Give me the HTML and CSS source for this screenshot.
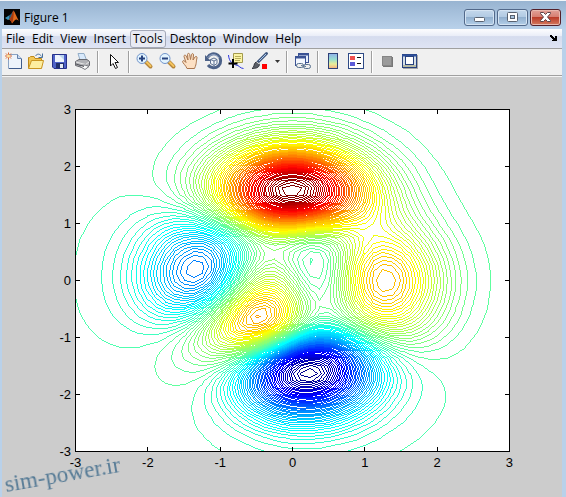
FILE: index.html
```html
<!DOCTYPE html>
<html lang="en">
<head>
<meta charset="utf-8">
<title>Figure 1</title>
<link rel="stylesheet" href="styles.css">
</head>
<body>
<div class="window">
  <header class="titlebar">
    <svg class="logo" width="16" height="16" viewBox="0 0 16 16" aria-hidden="true">
      <rect width="16" height="16" fill="#050505"/>
      <path d="M1 9 L5 6.500 L7 8 L5 10.500 L4 11 Z" fill="#3a93b8"/>
      <path d="M5 6.500 L7 5 L9.500 1.500 L7 9 L5 10.500 Z" fill="#285a78"/>
      <path d="M9.500 1.500 C11 3 13 9 15 12 C13 10.500 12 10 10.500 11.500 L8 14.500 C7.500 12.500 6.500 11 5 10.500 C7.500 9 8 4 9.500 1.500 Z" fill="#e06a1c"/>
      <path d="M9.500 1.500 C10 4 9.500 10 8 14.500 C7.500 12.500 6.500 11 5 10.500 C7.500 9 8 4 9.500 1.500 Z" fill="#a33a12"/>
    </svg>
    <h1 class="title">Figure 1</h1>
    <div class="controls">
      <button class="control" aria-label="Minimize"><svg width="30" height="16" viewBox="0 0 30 16"><rect x="10.500" y="8.500" width="10" height="4" rx="1" fill="#fff" stroke="#596270"/></svg></button>
      <button class="control" aria-label="Maximize"><svg width="30" height="16" viewBox="0 0 30 16"><rect x="10.500" y="3.500" width="10" height="9" rx="1" fill="#fff" stroke="#596270"/><rect x="13.500" y="6.500" width="4" height="3" fill="#a9c4df" stroke="#596270"/></svg></button>
      <button class="control control-close" aria-label="Close"><svg width="30" height="16" viewBox="0 0 30 16"><path d="M10.500 3.500 H13.500 L15.500 5.500 L17.500 3.500 H20.500 V4.500 L17.500 8 L20.500 11.500 V12.500 H17.500 L15.500 10.500 L13.500 12.500 H10.500 V11.500 L13.500 8 L10.500 4.500 Z" fill="#fff" stroke="#5c4448"/></svg></button>
    </div>
  </header>

  <nav class="menubar">
    <button class="menu">File</button>
    <button class="menu">Edit</button>
    <button class="menu">View</button>
    <button class="menu">Insert</button>
    <button class="menu menu-active">Tools</button>
    <button class="menu">Desktop</button>
    <button class="menu">Window</button>
    <button class="menu">Help</button>
    <button class="dock-arrow" aria-label="Dock figure"><svg width="8" height="7" viewBox="0 0 8 7" shape-rendering="crispEdges"><path d="M0 0h2v1h1v1h1v1h1v-2h2v5h-5v-1h1v-1h-1v-1h-1v-1h-1z"/></svg></button>
  </nav>

  <div class="toolbar">
    <button class="tool" aria-label="New figure"><svg viewBox="0 0 23 24"><path d="M6.500 4.500 H15.500 L19.500 8.500 V18.500 H6.500 Z" fill="#eef4fb" stroke="#8ba3c4"/><path d="M19.500 9 V18.500 H7" fill="none" stroke="#3f5c8c"/><path d="M15.500 4.500 V8.500 H19.500" fill="#c9d9ee" stroke="#6482ad"/><path d="M6.500 2.500 V9.500 M3 6 H10 M4 3.500 L9 8.500 M9 3.500 L4 8.500" stroke="#d9652c"/><circle cx="6.500" cy="6" r="1.500" fill="#ffe3a0"/></svg></button>
    <button class="tool" aria-label="Open file"><svg viewBox="0 0 23 24"><path d="M3.500 18 V7.500 H4.500 L5.500 6.500 H9 L10 8.500 H16.500 V18 Z" fill="#f2c755" stroke="#c08a1a"/><path d="M3.500 18.500 L6.500 10.500 H18.500 L16.500 18.500 Z" fill="#fdeea0" stroke="#c99521"/><path d="M10.500 6 C12 3.500 15 3.500 16.500 6.500 M17.500 3.500 V7.500 H13.500" fill="none" stroke="#49719d"/></svg></button>
    <button class="tool" aria-label="Save figure"><svg viewBox="0 0 23 24"><path d="M4.500 4.500 H18.500 V18.500 H6 L4.500 17 Z" fill="#4f62c8" stroke="#26318a"/><rect x="7" y="5" width="9" height="7" fill="#eef4fc"/><path d="M11 5 H16 V10 Z" fill="#b9d4ee"/><rect x="8" y="13" width="8" height="5" fill="#22306c"/><rect x="12" y="14" width="3" height="4" fill="#e6ebf5"/></svg></button>
    <button class="tool" aria-label="Print figure"><svg viewBox="0 0 23 24"><path d="M7 3.500 H13 L15.500 10 H9 Z" fill="#d8e9fb" stroke="#93adc7"/><path d="M4.500 11.500 L8 9.500 H16 L18.500 11.500 V15.500 L14.500 18.500 L4.500 15.500 Z" fill="#b0b1b5" stroke="#66676d"/><path d="M5 12 L14.500 14.500 L18 12" fill="none" stroke="#e6e6e6"/><path d="M8 16 L14 19.500 L18 16.500 L14 15 Z" fill="#fafafa" stroke="#787a80"/><path d="M5 14 L13 16.500" stroke="#55565c"/></svg></button>
    <span class="separator"></span>
    <button class="tool" aria-label="Edit plot"><svg viewBox="0 0 23 24"><path d="M8.500 4.500 V16 L11 13.500 L13.500 18.500 L15.500 17.500 L13 12.500 H16.500 Z" fill="#fff" stroke="#111"/></svg></button>
    <span class="separator"></span>
    <button class="tool" aria-label="Zoom in"><svg viewBox="0 0 23 24"><path d="M13 12 L17.500 16.500" stroke="#b5853a" stroke-width="4" stroke-linecap="round"/><path d="M13.500 12 L17.500 16" stroke="#f4c45e" stroke-width="2" stroke-linecap="round"/><circle cx="9" cy="8.500" r="5" fill="#e2f4ff" stroke="#7194cb"/><path d="M6 8.500 H12 M9 5.500 V11.500" stroke="#27427f" stroke-width="2"/></svg></button>
    <button class="tool" aria-label="Zoom out"><svg viewBox="0 0 23 24"><path d="M13 12 L17.500 16.500" stroke="#b5853a" stroke-width="4" stroke-linecap="round"/><path d="M13.500 12 L17.500 16" stroke="#f4c45e" stroke-width="2" stroke-linecap="round"/><circle cx="9" cy="8.500" r="5" fill="#e2f4ff" stroke="#7194cb"/><path d="M6 8.500 H12" stroke="#27427f" stroke-width="2"/></svg></button>
    <button class="tool" aria-label="Pan"><svg viewBox="0 0 23 24"><path d="M8 18.500 C7 15.500 3.500 13 3.500 11.500 C4 10 5.500 10.500 7 12.500 L5 6.500 C4.800 5 6.500 4.500 7.200 6 L9 10 L8.500 4.500 C8.500 3 10.500 3 10.700 4.500 L11.500 9.500 L12.500 4.500 C13 3 14.700 3.500 14.500 5 L14 10 L16 7 C17 5.800 18.300 6.500 18 8 C17 11 18 13 15.500 18.500 Z" fill="#fce0c4" stroke="#a9764f"/></svg></button>
    <button class="tool" aria-label="Rotate 3D"><svg viewBox="0 0 23 24"><path d="M5.500 7.500 A7 7 0 1 1 6 15" fill="none" stroke="#4d6289" stroke-width="3"/><path d="M6 7.500 A6.500 6.500 0 0 1 17 8" fill="none" stroke="#a2b3d1"/><path d="M3 5 V11 H9 Z" fill="#4d6289"/><path d="M8.500 9.500 L12 8 L15 9.500 V13.500 L12 15.500 L8.500 13.500 Z M8.500 9.500 L12 11 L15 9.500 M12 11 V15.500" fill="#f4f7fc" stroke="#5f7293"/></svg></button>
    <button class="tool" aria-label="Data cursor"><svg viewBox="0 0 23 24"><path d="M3.500 5 C4 12 8 14 11 15 C14 15 15 18.500 18.500 18.500" fill="none" stroke="#2c35e0"/><path d="M8.500 3.500 H17.500 V12.500 H12 L8.500 14 Z" fill="#fbf4a4" stroke="#a39a4c"/><path d="M10 6.500 H16 M10 8.500 H16 M10 10.500 H15" stroke="#b7ae5a"/><path d="M8 9 V18 M3.500 13.500 H12.500" stroke="#000" stroke-width="2"/></svg></button>
    <button class="tool" aria-label="Brush data"><svg viewBox="0 0 23 24"><path d="M10 12 L18.500 3.500" stroke="#40577e" stroke-width="3" stroke-linecap="round"/><path d="M11 11 L18 4" stroke="#a9c8ea"/><path d="M4 18.500 C7 17 5 14 8 12 L11.500 14 C11.500 18 7 18.500 4 18.500 Z" fill="#5b5f68" stroke="#33363e"/><path d="M8.500 12 L11.500 14" stroke="#e9e9e9"/><rect x="14" y="14" width="5" height="5" fill="#f00"/></svg></button>
    <button class="tool tool-caret" aria-label="Brush colour"><svg viewBox="0 0 12 24"><path d="M4 10 H9 L6.500 13 Z" fill="#333"/></svg></button>
    <span class="separator"></span>
    <button class="tool" aria-label="Link plot"><svg viewBox="0 0 23 24"><rect x="7.500" y="3.500" width="10" height="9" fill="#e9f2ff" stroke="#3b5394"/><path d="M7 4.500 H18" stroke="#3b5394" stroke-width="2"/><rect x="4.500" y="6.500" width="10" height="9" fill="#f4f8ff" stroke="#3b5394"/><path d="M4 7.500 H15" stroke="#3b5394" stroke-width="2"/><rect x="5.500" y="13.500" width="7" height="4" rx="2" fill="#eee" stroke="#57708e"/><rect x="12.500" y="14.500" width="7" height="4" rx="2" fill="#eee" stroke="#57708e"/><path d="M10 15.500 L15 16.500" stroke="#57708e"/></svg></button>
    <span class="separator"></span>
    <button class="tool" aria-label="Insert colorbar"><svg viewBox="0 0 23 24"><defs><linearGradient id="bar" x1="0" y1="0" x2="0" y2="1"><stop offset="0" stop-color="#8fb0ea"/><stop offset=".4" stop-color="#98dfd0"/><stop offset=".7" stop-color="#e9ee99"/><stop offset="1" stop-color="#f6ae81"/></linearGradient></defs><rect x="6.500" y="3.500" width="9" height="15" fill="url(#bar)" stroke="#2e4076"/></svg></button>
    <button class="tool" aria-label="Insert legend"><svg viewBox="0 0 23 24"><rect x="3.500" y="3.500" width="15" height="15" fill="#fff" stroke="#2e4a86"/><rect x="5" y="6" width="5" height="4" fill="#f05050"/><rect x="5" y="12" width="5" height="4" fill="#5a5ad8"/><path d="M12 7.500 H16 M12 13.500 H16" stroke="#111"/></svg></button>
    <span class="separator"></span>
    <button class="tool" aria-label="Hide plot tools"><svg viewBox="0 0 23 24"><rect x="7" y="7" width="10" height="10" fill="#777"/><rect x="6.500" y="6.500" width="9" height="9" fill="#9b9b9b" stroke="#868686"/></svg></button>
    <button class="tool" aria-label="Show plot tools"><svg viewBox="0 0 23 24"><rect x="4" y="5" width="15" height="14" fill="#a8a8a8"/><rect x="3.500" y="4.500" width="14" height="13" fill="#d6dfe6" stroke="#27417f"/><path d="M3 5.500 H18" stroke="#2e509c" stroke-width="2"/><rect x="6.500" y="6.500" width="8" height="8" fill="#fff" stroke="#27417f"/><path d="M4 16 H17" stroke="#b9bca5" stroke-width="2"/></svg></button>
  </div>

  <main class="figure">
    <div class="axis-y"><span>3</span><span>2</span><span>1</span><span>0</span><span>-1</span><span>-2</span><span>-3</span></div>
    <canvas class="plot" id="plot" aria-label="Contour plot of the peaks function"></canvas>
    <div class="axis-x"><span>-3</span><span>-2</span><span>-1</span><span>0</span><span>1</span><span>2</span><span>3</span></div>
    <span class="watermark">sim-power.ir</span>
  </main>
</div>
<script src="plot.js"></script>
</body>
</html>
```
FILE: styles.css
```css
* { box-sizing: border-box; }

body {
  margin: 0;
  min-height: 100vh;
  display: flex;
  background: #b9d1ea;
  font-family: "Open Sans", "Noto Sans", sans-serif;
  font-size: 12px;
  color: #000;
}

button {
  margin: 0;
  padding: 0;
  border: 0;
  background: none;
  font: inherit;
  color: inherit;
}

svg { display: block; }

.window {
  flex: 1;
  display: flex;
  flex-direction: column;
  min-width: 0;
  border-top: 1px solid #f4f7fa;
}

.titlebar {
  display: flex;
  align-items: center;
  height: 28px;
  padding: 4px 5px 0 4px;
  background: linear-gradient(#98b4d1, #b9d1ea);
}

.title {
  flex: 1;
  margin: 0 0 0 4px;
  font-size: 12px;
  font-weight: 400;
}

.controls {
  display: flex;
  gap: 2px;
}

.control {
  width: 31px;
  height: 17px;
  border: 1px solid #52698a;
  border-radius: 3px;
  background: linear-gradient(#c4d8ec, #b0c9e2 50%, #92b0cf 50%, #b4cfe8);
  box-shadow: inset 0 0 0 1px #d5e4f3;
  overflow: hidden;
}

.control svg { margin: -1px; }

.control-close {
  border-color: #54202a;
  background: linear-gradient(#e2a198, #d57b6e 50%, #bb3c29 50%, #d47a5f);
  box-shadow: inset 0 0 0 1px #e9b8ae;
}

.menubar {
  display: flex;
  align-items: center;
  gap: 1px;
  height: 20px;
  margin: 0 4px 0 2px;
  padding-left: 1px;
  border-bottom: 1px solid #a0a0a0;
  background: linear-gradient(#fdfdfe, #eaeef8 35%, #d5dcee 40%, #dfe4f4);
}

.menu {
  height: 18px;
  padding: 0 2px;
  border: 1px solid transparent;
  border-radius: 3px;
  line-height: 16px;
}

.menu-active {
  border-color: #a3a8b8;
  background: #e9ebf4;
}

.dock-arrow {
  margin: 0 4px 0 auto;
}

.toolbar {
  display: flex;
  align-items: center;
  height: 27px;
  margin: 0 4px 0 2px;
  padding-bottom: 1px;
  border-bottom: 1px solid #a0a0a0;
  background: #f0f0f0;
}

.tool {
  width: 23px;
  height: 24px;
}

.tool-caret { width: 12px; }

.separator {
  width: 8px;
  height: 22px;
  border-left: 3px solid transparent;
  border-right: 3px solid transparent;
  background: linear-gradient(90deg, #a0a0a0 50%, #fff 50%) padding-box;
}

.figure {
  position: relative;
  flex: 1;
  display: grid;
  grid-template-columns: 69px 1fr;
  grid-template-rows: auto 1fr;
  column-gap: 4px;
  margin: 0 4px 0 2px;
  padding: 32px 52px 0 0;
  border-top: 1px solid #f4f4f4;
  background: #ccc;
  font-family: "Liberation Sans", Arial, sans-serif;
  font-size: 13px;
}

.plot {
  display: block;
  width: 100%;
  aspect-ratio: 435 / 343;
}

.axis-y {
  display: flex;
  flex-direction: column;
  justify-content: space-between;
  align-items: flex-end;
}

.axis-y span {
  height: 1px;
  line-height: 1px;
}

.axis-x {
  grid-column: 2;
  display: flex;
  justify-content: space-between;
  padding-top: 3px;
}

.axis-x span {
  display: flex;
  justify-content: center;
  width: 1px;
  line-height: 16px;
}

.watermark {
  position: absolute;
  left: 5px;
  bottom: 0;
  font: 23px/24px "Liberation Serif", "Times New Roman", serif;
  color: #567b96;
  transform: rotate(-10deg);
  transform-origin: left bottom;
}
```
FILE: plot.js
```js
const canvas = document.getElementById('plot');
const W = canvas.width = canvas.clientWidth;
const H = canvas.height = canvas.clientHeight;
const ctx = canvas.getContext('2d');

const N = 49;
const LEVELS = 100;

function peaks(x, y) {
  return 3 * (1 - x) ** 2 * Math.exp(-x * x - (y + 1) ** 2)
    - 10 * (x / 5 - x ** 3 - y ** 5) * Math.exp(-x * x - y * y)
    - Math.exp(-((x + 1) ** 2) - y * y) / 3;
}

// 64-entry jet colour map
function jet(t) {
  const i = Math.min(63, Math.floor(t * 64)) + 1;
  const ramp = (c) => Math.max(0, Math.min(1, 1.5 - Math.abs(i - c) / 16));
  return `rgb(${[48, 32, 16].map((c) => Math.round(255 * ramp(c))).join(',')})`;
}

// One-pixel aliased line
function line(x0, y0, x1, y1) {
  x0 = Math.round(x0); y0 = Math.round(y0);
  x1 = Math.round(x1); y1 = Math.round(y1);
  const dx = Math.abs(x1 - x0), dy = -Math.abs(y1 - y0);
  const sx = x0 < x1 ? 1 : -1, sy = y0 < y1 ? 1 : -1;
  let err = dx + dy;
  for (;;) {
    ctx.fillRect(x0, y0, 1, 1);
    if (x0 === x1 && y0 === y1) break;
    const e = 2 * err;
    if (e >= dy) { err += dy; x0 += sx; }
    if (e <= dx) { err += dx; y0 += sy; }
  }
}

const axis = Array.from({ length: N }, (_, i) => -3 + (6 * i) / (N - 1));
const z = axis.map((y) => axis.map((x) => peaks(x, y)));
const zmin = Math.min(...z.flat());
const zmax = Math.max(...z.flat());
const px = (i) => (i / (N - 1)) * (W - 1);
const py = (j) => (1 - j / (N - 1)) * (H - 1);

ctx.fillStyle = '#fff';
ctx.fillRect(0, 0, W, H);

for (let k = 1; k <= LEVELS; k++) {
  const level = zmin + (k * (zmax - zmin)) / (LEVELS + 1);
  ctx.fillStyle = jet((k - 1) / (LEVELS - 1));
  for (let j = 0; j < N - 1; j++) {
    for (let i = 0; i < N - 1; i++) {
      const corners = [[i, j], [i + 1, j], [i + 1, j + 1], [i, j + 1]];
      const hits = [];
      for (let e = 0; e < 4; e++) {
        const [ai, aj] = corners[e];
        const [bi, bj] = corners[(e + 1) % 4];
        const a = z[aj][ai], b = z[bj][bi];
        if ((a < level) !== (b < level)) {
          const t = (level - a) / (b - a);
          hits.push([px(ai + t * (bi - ai)), py(aj + t * (bj - aj))]);
        }
      }
      for (let h = 0; h + 1 < hits.length; h += 2) {
        line(...hits[h], ...hits[h + 1]);
      }
    }
  }
}

ctx.fillStyle = '#000';
ctx.fillRect(0, 0, W, 1);
ctx.fillRect(0, H - 1, W, 1);
ctx.fillRect(0, 0, 1, H);
ctx.fillRect(W - 1, 0, 1, H);
for (let n = 1; n < 6; n++) {
  const x = Math.round((n * (W - 1)) / 6);
  const y = Math.round((n * (H - 1)) / 6);
  ctx.fillRect(x, 0, 1, 5);
  ctx.fillRect(x, H - 5, 1, 5);
  ctx.fillRect(0, y, 5, 1);
  ctx.fillRect(W - 5, y, 5, 1);
}
```
